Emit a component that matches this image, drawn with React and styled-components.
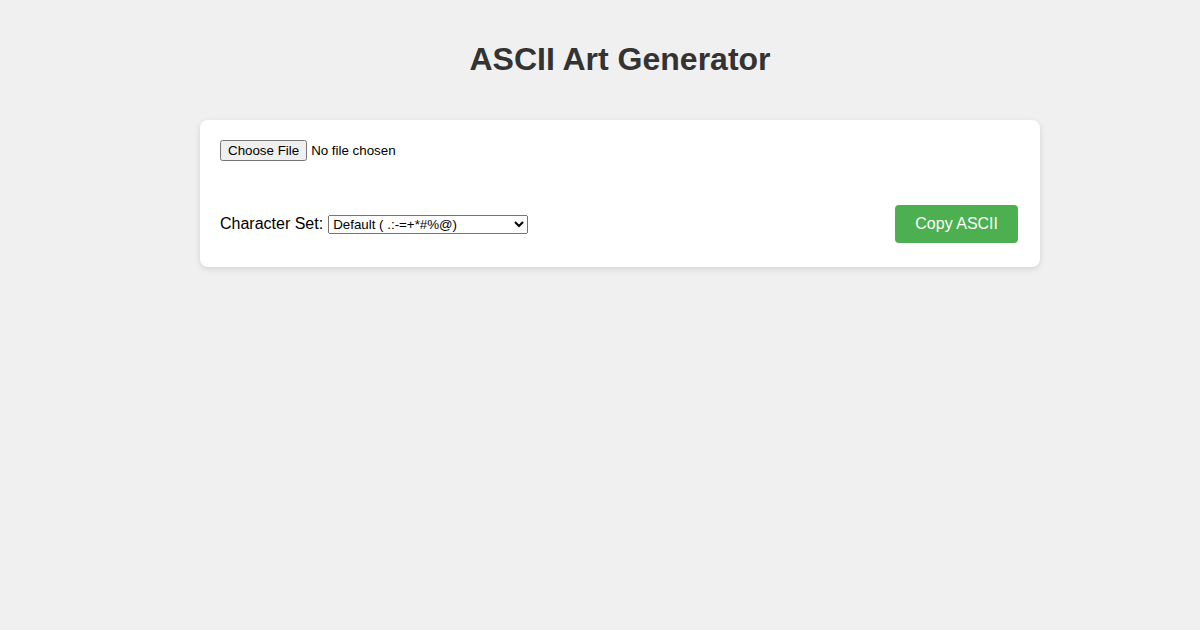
import React from 'react';
import styled, { createGlobalStyle } from 'styled-components';

const GlobalStyle = createGlobalStyle`
  html, body {
    margin: 0;
    padding: 0;
    background: #f0f0f0;
    font-family: "Liberation Sans", Arial, sans-serif;
  }
`;

const Page = styled.div`
  display: flex;
  justify-content: center;
  padding: 20px 0 20px 40px;
`;

const Container = styled.div`
  width: 840px;
`;

const Title = styled.h1`
  text-align: center;
  color: #333;
  font-size: 32px;
  font-weight: bold;
  margin: 21px 0 42px;
  line-height: 37px;
`;

const Card = styled.div`
  background: #fff;
  border-radius: 8px;
  box-shadow: 0 2px 6px rgba(0, 0, 0, 0.12);
  padding: 20px 22px 24px 20px;
`;

const FileInput = styled.input`
  display: block;
  font-family: "Liberation Sans", Arial, sans-serif;
  font-size: 13.33px;
  color: #000;
`;

const Controls = styled.div`
  display: flex;
  align-items: center;
  justify-content: space-between;
  margin-top: 44px;
`;

const Field = styled.label`
  display: flex;
  align-items: center;
  gap: 5px;
  font-size: 16px;
  color: #000;
`;

const Select = styled.select`
  width: 200px;
  height: 19px;
  font-family: "Liberation Sans", Arial, sans-serif;
  font-size: 13.33px;
  padding: 0;
`;

const Button = styled.button`
  background: #4caf50;
  color: #fff;
  border: none;
  border-radius: 4px;
  padding: 0 20px;
  height: 38px;
  font-family: "Liberation Sans", Arial, sans-serif;
  font-size: 16px;
  cursor: pointer;
`;

export default function App() {
  return (
    <>
      <GlobalStyle />
      <Page>
        <Container>
          <Title>ASCII Art Generator</Title>
          <Card>
            <FileInput type="file" accept="image/*" />
            <Controls>
              <Field>
                Character Set:
                <Select defaultValue="default">
                  <option value="default">Default ( .:-=+*#%@)</option>
                  <option value="blocks">Blocks (░▒▓█)</option>
                  <option value="simple">Simple ( .#)</option>
                </Select>
              </Field>
              <Button>Copy ASCII</Button>
            </Controls>
          </Card>
        </Container>
      </Page>
    </>
  );
}
